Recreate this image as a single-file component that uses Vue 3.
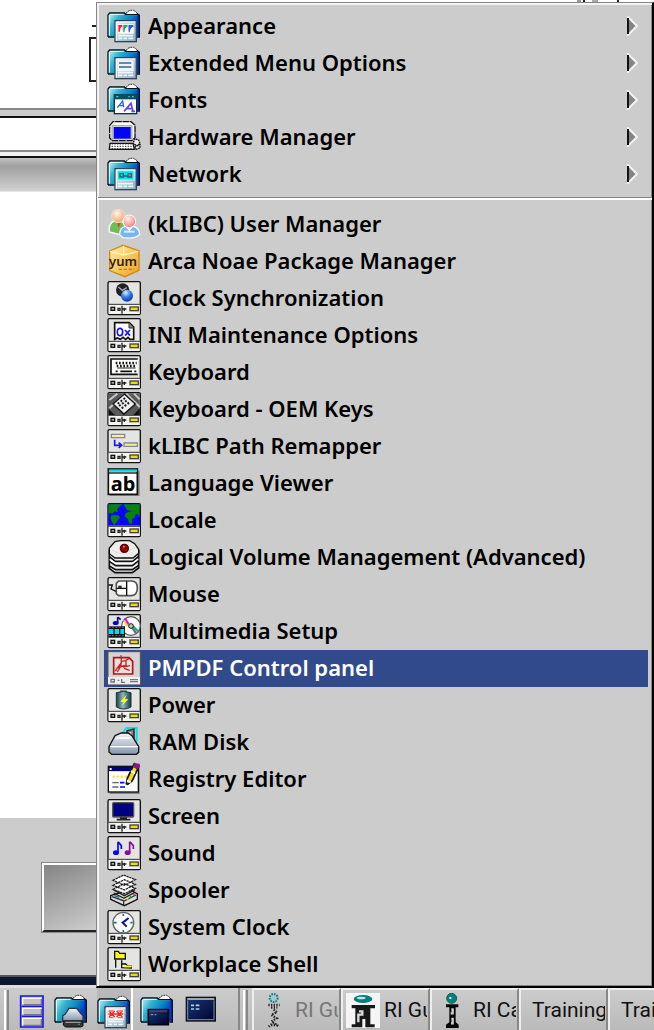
<script setup>
const folders = [
  { label: 'Appearance', icon: 'appearance' },
  { label: 'Extended Menu Options', icon: 'menuopts' },
  { label: 'Fonts', icon: 'fonts' },
  { label: 'Hardware Manager', icon: 'hardware' },
  { label: 'Network', icon: 'network' }
]
const programs = [
  { label: '(kLIBC) User Manager', icon: 'users' },
  { label: 'Arca Noae Package Manager', icon: 'yum', glyph: 'yum' },
  { label: 'Clock Synchronization', icon: 'sync', panel: true },
  { label: 'INI Maintenance Options', icon: 'ini', panel: true },
  { label: 'Keyboard', icon: 'keyboard', panel: true },
  { label: 'Keyboard - OEM Keys', icon: 'oem', panel: true },
  { label: 'kLIBC Path Remapper', icon: 'path', panel: true },
  { label: 'Language Viewer', icon: 'language', glyph: 'ab' },
  { label: 'Locale', icon: 'locale', panel: true },
  { label: 'Logical Volume Management (Advanced)', icon: 'volume' },
  { label: 'Mouse', icon: 'mouse', panel: true },
  { label: 'Multimedia Setup', icon: 'multimedia', panel: true },
  { label: 'PMPDF Control panel', icon: 'pdf', selected: true },
  { label: 'Power', icon: 'power', panel: true },
  { label: 'RAM Disk', icon: 'ram' },
  { label: 'Registry Editor', icon: 'registry' },
  { label: 'Screen', icon: 'screen', panel: true },
  { label: 'Sound', icon: 'sound', panel: true },
  { label: 'Spooler', icon: 'spooler' },
  { label: 'System Clock', icon: 'clock', panel: true },
  { label: 'Workplace Shell', icon: 'shell', panel: true }
]
const tasks = [
  { label: 'RI Gu', icon: 'ri-dim', dim: true },
  { label: 'RI Gu', icon: 'ri-wide' },
  { label: 'RI Ca', icon: 'ri' },
  { label: 'Training' },
  { label: 'Training' }
]
</script>

<template>
  <svg class="defs" width="0" height="0" aria-hidden="true">
    <defs>
      <linearGradient id="g-folder" x1="0" y1="0" x2="1" y2="0.5">
        <stop offset="0" stop-color="#c8f4fa" /><stop offset="0.35" stop-color="#35b4cf" />
        <stop offset="0.7" stop-color="#0787c4" /><stop offset="1" stop-color="#0038c8" />
      </linearGradient>
      <linearGradient id="g-glass" x1="0" y1="0" x2="1" y2="1">
        <stop offset="0" stop-color="#e4eef2" /><stop offset="1" stop-color="#8fa9ba" />
      </linearGradient>
      <linearGradient id="g-metal" x1="0" y1="0" x2="0" y2="1">
        <stop offset="0" stop-color="#f2f5fa" /><stop offset="1" stop-color="#8494ac" />
      </linearGradient>
      <linearGradient id="g-navy" x1="0" y1="0" x2="1" y2="1">
        <stop offset="0" stop-color="#1b3a80" /><stop offset="1" stop-color="#000028" />
      </linearGradient>
      <linearGradient id="g-battery" x1="0" y1="0" x2="1" y2="0">
        <stop offset="0" stop-color="#18424a" /><stop offset="0.45" stop-color="#8fb8bd" /><stop offset="1" stop-color="#143840" />
      </linearGradient>
      <radialGradient id="g-ball" cx="0.4" cy="0.25" r="0.7">
        <stop offset="0" stop-color="#d8f0ff" /><stop offset="0.5" stop-color="#3d86e8" /><stop offset="1" stop-color="#0a3db8" />
      </radialGradient>
      <radialGradient id="g-face" cx="0.4" cy="0.3" r="0.7">
        <stop offset="0" stop-color="#fff4e0" /><stop offset="1" stop-color="#eda878" />
      </radialGradient>
      <radialGradient id="g-face2" cx="0.4" cy="0.3" r="0.7">
        <stop offset="0" stop-color="#fff0ee" /><stop offset="1" stop-color="#ee8080" />
      </radialGradient>
      <linearGradient id="g-yum" x1="0" y1="0" x2="1" y2="1">
        <stop offset="0" stop-color="#fff0a8" /><stop offset="1" stop-color="#f0a018" />
      </linearGradient>
    </defs>

    <symbol id="i-folder" viewBox="0 0 102 105">
      <path d="M88 16H97V82H88Z" fill="#0838b8" />
      <path d="M4 13H90V82H4Z" fill="url(#g-folder)" />
      <path d="M57 19L63 8 70 4H80L88 9 91 19Z" fill="#fff" />
      <path d="M57 13L63 7 70 4H80L88 9 91 15" fill="none" stroke="#333" stroke-width="3" stroke-dasharray="6 2" />
      <path d="M3 84V18L8 12H52L58 17H90M90 14L97 19V84H88M23 84H3" fill="none" stroke="#001018" stroke-width="4" />
      <path d="M7 80V20L10 16H50" fill="none" stroke="#e4ffff" stroke-width="3" />
    </symbol>
    <symbol id="i-window" viewBox="0 0 102 105">
      <rect x="24" y="35" width="64" height="63" fill="url(#g-glass)" stroke="#2b4860" stroke-width="4" />
      <path d="M28 95V39H85" fill="none" stroke="#fff" stroke-width="3" />
      <path d="M33 80H78M33 88H46M50 88H60M64 88H79" stroke="#e9f6fa" stroke-width="5" />
    </symbol>
    <symbol id="i-panel" viewBox="0 0 102 105">
      <rect x="3" y="2" width="97" height="99" rx="4" fill="#e4e4e2" stroke="#111" stroke-width="4" />
      <path d="M5 70H98" stroke="#333" stroke-width="3" />
      <rect x="5" y="72" width="93" height="27" fill="#f4f4f0" />
      <rect x="12" y="79" width="11" height="9" fill="#aaa" stroke="#111" stroke-width="4" />
      <path d="M33 82H39V88H33ZM45 74V98M52 80V90M45 84H58" fill="none" stroke="#222" stroke-width="4" />
      <rect x="69" y="78" width="25" height="11" fill="#e8e000" stroke="#444" stroke-width="4" />
    </symbol>

    <symbol id="i-appearance" viewBox="0 0 102 105">
      <use href="#i-folder" /><use href="#i-window" />
      <rect x="32" y="46" width="48" height="28" fill="#fff" />
      <path d="M34 48H45V53Q39 54 39 68H34Z" fill="#f21d43" /><path d="M49 48H61V54Q54 54 52 70H49Z" fill="#10b050" /><path d="M65 48H79V54Q71 54 68 70H65Z" fill="#1760ef" />
      <path d="M45 50H48V65M61 50H64V65" stroke="#e94ec2" stroke-width="2" fill="none" />
    </symbol>
    <symbol id="i-menuopts" viewBox="0 0 102 105">
      <use href="#i-folder" /><use href="#i-window" />
      <rect x="32" y="43" width="48" height="33" fill="#eff6fa" /><path d="M36 51H73M36 63H73" stroke="#3965a0" stroke-width="4" />
    </symbol>
    <symbol id="i-fonts" viewBox="0 0 102 105">
      <use href="#i-folder" />
      <rect x="22" y="35" width="67" height="57" fill="#fff" stroke="#063447" stroke-width="4" />
      <rect x="22" y="34" width="67" height="15" fill="#06515e" /><path d="M28 41H34M64 41H68M75 41H80" stroke="#66c9ca" stroke-width="4" />
      <path d="M31 74L47 54 50 73M37 68H50" fill="none" stroke="#1668e8" stroke-width="4" /><path d="M51 85L72 61 78 85M57 77H78M73 85H84" fill="none" stroke="#6544f0" stroke-width="5" />
    </symbol>
    <symbol id="i-hardware" viewBox="0 0 102 105">
      <path d="M8 17L18 5H72L84 16V53L74 62H16L8 54Z" fill="#fff" stroke="#111" stroke-width="4" stroke-dasharray="20 2" />
      <path d="M15 17H75V57H15Z" fill="#ddd" stroke="#777" stroke-width="2" /><rect x="20" y="21" width="51" height="35" fill="#0505ef" />
      <path d="M9 70H78L82 88H7Z" fill="#fff" stroke="#111" stroke-width="4" />
      <path d="M14 72H76M14 79H77M14 86H77" stroke="#222" stroke-width="3" stroke-dasharray="4 4" />
      <path d="M79 67L84 57 95 60 99 70 90 77 78 70M83 80L99 74V84L87 88Z" fill="#eee" stroke="#111" stroke-width="4" stroke-dasharray="5 2" />
    </symbol>
    <symbol id="i-network" viewBox="0 0 102 105">
      <use href="#i-folder" /><use href="#i-window" />
      <rect x="31" y="41" width="50" height="28" fill="#00e2ef" stroke="#baf6fa" stroke-width="3" /><path d="M39 50H49V60H39ZM63 50H73V60H63ZM49 57H63" fill="#7aa" stroke="#196675" stroke-width="4" />
    </symbol>
    <symbol id="i-users" viewBox="0 0 102 105">
      <path d="M7 75Q4 48 22 42H42Q57 51 55 75L39 83Z" fill="#70bc58" stroke="#fff" stroke-width="4" /><path d="M29 42L35 63 42 42" fill="#d83f28" />
      <circle cx="34" cy="27" r="20" fill="url(#g-face)" stroke="#f2dfca" stroke-width="3" />
      <path d="M38 83Q38 61 56 58H78Q97 62 98 82Q84 97 48 92Z" fill="#7ab4f4" stroke="#f6fcff" stroke-width="4" /><path d="M51 74H83" stroke="#d9efff" stroke-width="6" />
      <circle cx="67" cy="43" r="19" fill="url(#g-face2)" stroke="#fff" stroke-width="3" /><path d="M56 61H78L67 72Z" fill="#fff" />
    </symbol>
    <symbol id="i-yum" viewBox="0 0 102 105">
      <path d="M8 21L48 4 96 20V79L54 98 8 80Z" fill="url(#g-yum)" stroke="#d18918" stroke-width="4" /><path d="M10 22L50 33 94 22M50 5V30" fill="none" stroke="#fff3b7" stroke-width="4" />
      <path d="M35 76H82" stroke="#ba7c25" stroke-width="4" stroke-dasharray="10 5" />
    </symbol>
    <symbol id="i-sync" viewBox="0 0 102 105">
      <circle cx="47" cy="27" r="20" fill="#202020" /><path d="M34 18L46 28 59 20" fill="none" stroke="#aaa" stroke-width="4" /><circle cx="60" cy="44" r="18" fill="url(#g-ball)" />
    </symbol>
    <symbol id="i-ini" viewBox="0 0 102 105">
      <path d="M23 14H67L80 27V64H69L63 58 56 64 48 58 40 64 31 60 23 64Z" fill="#fff" stroke="#111" stroke-width="5" /><path d="M66 14V30H80" fill="#888" stroke="#333" stroke-width="3" />
      <ellipse cx="39" cy="42" rx="8" ry="11" fill="none" stroke="#1616ff" stroke-width="5" /><path d="M54 36L69 53M69 36L54 53" stroke="#1616ff" stroke-width="5" />
    </symbol>
    <symbol id="i-keyboard" viewBox="0 0 102 105">
      <path d="M92 12H12V58H92" fill="#fff" stroke="#111" stroke-width="5" /><path d="M26 24H89M29 33H89" stroke="#111" stroke-width="7" stroke-dasharray="5 5" /><path d="M31 39H86" stroke="#222" stroke-width="3" /><path d="M26 49H32M40 49H75M82 49H88" stroke="#111" stroke-width="5" />
    </symbol>
    <symbol id="i-oem" viewBox="0 0 102 105">
      <path d="M5 4H98V69H5Z" fill="#595959" /><path d="M7 24L31 5M7 49L53 5M58 5L98 45M81 5L98 22" stroke="#c8c8c8" stroke-width="6" /><path d="M5 51L24 69H5ZM98 49L79 69H98Z" fill="#111" />
      <path d="M52 6L85 36 51 66 18 36Z" fill="#eee" stroke="#111" stroke-width="4" /><path d="M32 35L54 18M36 42L63 23M44 49L70 29" stroke="#222" stroke-width="6" stroke-dasharray="6 5" />
    </symbol>
    <symbol id="i-path" viewBox="0 0 102 105">
      <path d="M13 16H53V26H13ZM51 42H91V52H51Z" fill="#f4f0aa" stroke="#888" stroke-width="4" /><path d="M23 32V49H43M35 41L44 49 35 57" fill="none" stroke="#1717df" stroke-width="5" />
    </symbol>
    <symbol id="i-language" viewBox="0 0 102 105">
      <path d="M8 14H98V90H8Z" fill="#888" /><rect x="4" y="9" width="87" height="76" fill="#fff" stroke="#111" stroke-width="5" /><path d="M6 14H90" stroke="#00dce2" stroke-width="7" /><path d="M5 21H90" stroke="#111" stroke-width="4" />
    </symbol>
    <symbol id="i-locale" viewBox="0 0 102 105">
      <path d="M4 3H99V68H4Z" fill="#0808ef" /><path d="M5 4H46L36 13 30 18 33 28 24 25 16 32 5 30ZM14 37L34 37 39 43 29 56 22 67 14 55 10 43ZM50 4H98V42L91 32 83 35 74 24 60 21ZM56 30L72 25 87 32 82 44 75 48 76 61 68 63 61 46 53 41Z" fill="#078407" />
    </symbol>
    <symbol id="i-volume" viewBox="0 0 102 105">
      <path d="M7 31V85L24 98H76L95 84V31Z" fill="#eee" stroke="#111" stroke-width="5" /><path d="M7 50L25 64H77L95 49M7 64L26 77H76L95 62M7 78L26 89H76L95 76" fill="none" stroke="#111" stroke-width="5" /><path d="M8 58L26 70H76L94 57" fill="none" stroke="#fff" stroke-width="4" />
      <path d="M7 24L24 5 40 2H68L83 11 95 28V40L78 54H24L7 41Z" fill="#eee" stroke="#111" stroke-width="4" /><path d="M16 31L40 41 84 24" fill="none" stroke="#ddd" stroke-width="3" /><circle cx="52" cy="25" r="12" fill="#a50000" stroke="#400" stroke-width="4" /><path d="M48 20H53" stroke="#ff7960" stroke-width="5" />
    </symbol>
    <symbol id="i-mouse" viewBox="0 0 102 105">
      <path d="M35 12H74Q91 12 91 33T74 56H35L28 50V19Z" fill="#fff" stroke="#555" stroke-width="5" /><path d="M59 13V56M28 34H59M4 24H16L12 36 27 43" fill="none" stroke="#111" stroke-width="4" /><rect x="34" y="26" width="10" height="9" fill="#222" />
    </symbol>
    <symbol id="i-multimedia" viewBox="0 0 102 105">
      <circle cx="72" cy="36" r="28" fill="#fff" stroke="#555" stroke-width="4" /><path d="M48 17L68 31 58 39Z" fill="#f4d428" /><path d="M54 13L65 31" stroke="#e800e8" stroke-width="6" /><path d="M74 39L87 59M78 36L94 53" stroke="#00bd63" stroke-width="6" /><path d="M79 45L88 56" stroke="#e020d0" stroke-width="5" /><circle cx="72" cy="36" r="7" fill="#ccc" stroke="#111" stroke-width="3" />
      <path d="M5 37H54V69H5Z" fill="#111" /><path d="M5 45H51V60H5Z" fill="#00dfe6" /><path d="M5 40H53M5 65H53" stroke="#275ea0" stroke-width="4" stroke-dasharray="6 4" /><path d="M21 43V62M38 43V62" stroke="#111" stroke-width="4" /><path d="M32 9V26M32 9L41 17" stroke="#0808ac" stroke-width="5" /><ellipse cx="26" cy="27" rx="9" ry="6" fill="#0808ac" />
    </symbol>
    <symbol id="i-pdf" viewBox="0 0 102 105">
      <path d="M3 2H100V101H3Z" fill="#d4d4d4" stroke="#555" stroke-width="3" /><path d="M3 78H99V100H3Z" fill="#eee" /><path d="M12 85H22V93H12ZM32 88H37M44 84V94H54M69 86H93M69 92H93" fill="none" stroke="#777" stroke-width="4" />
      <path d="M20 20H66L77 31V69H20Z" fill="#e8dedb" stroke="#aa1717" stroke-width="5" /><path d="M42 13L43 35 25 60M43 34Q43 45 31 63M43 31L56 29 66 22M57 27V43L48 48 69 44M29 51L53 43M51 52L68 58" fill="none" stroke="#c32525" stroke-width="4" />
    </symbol>
    <symbol id="i-power" viewBox="0 0 102 105">
      <path d="M39 7H60V13H39Z" fill="#667" /><path d="M28 14Q49 7 72 14V57Q51 69 28 57Z" fill="url(#g-battery)" stroke="#17363b" stroke-width="3" /><path d="M59 20L40 41H51L43 55 64 34H53Z" fill="#ffff22" />
    </symbol>
    <symbol id="i-ram" viewBox="0 0 102 105">
      <path d="M44 28L58 9H89V51" fill="none" stroke="#00e5e8" stroke-width="6" /><path d="M60 17L81 12V54H60Z" fill="#888" stroke="#111" stroke-width="4" /><path d="M70 21V50" stroke="#ddd" stroke-width="5" />
      <path d="M24 32L43 24H64L75 32 95 65V82L88 88H14L6 81V65Z" fill="url(#g-metal)" stroke="#111" stroke-width="4" /><path d="M9 65H93" stroke="#fff" stroke-width="4" /><path d="M28 39H70" stroke="#fff" stroke-width="5" />
    </symbol>
    <symbol id="i-registry" viewBox="0 0 102 105">
      <path d="M8 16H98V96H8Z" fill="#888" /><rect x="4" y="13" width="90" height="77" fill="#fff" stroke="#111" stroke-width="4" /><path d="M6 21H92" stroke="#00007f" stroke-width="13" /><path d="M8 21H14" stroke="#eee" stroke-width="6" /><path d="M17 44H68" stroke="#ffe500" stroke-width="7" stroke-dasharray="6 6" /><path d="M16 62H35M16 75H34" stroke="#666" stroke-width="4" /><path d="M39 62H52M39 75H54" stroke="#00f" stroke-width="5" />
      <path d="M82 5L96 12 76 56 62 67 58 65 61 49Z" fill="#f4dc19" stroke="#111" stroke-width="5" /><path d="M81 4L98 5V17L89 22 78 15Z" fill="#8b168b" /><path d="M72 27L84 34M60 55L71 61" stroke="#fff" stroke-width="6" />
    </symbol>
    <symbol id="i-screen" viewBox="0 0 102 105">
      <rect x="17" y="11" width="63" height="43" rx="3" fill="#000080" stroke="#555" stroke-width="4" /><path d="M39 57H60M29 62H70" stroke="#222" stroke-width="5" />
    </symbol>
    <symbol id="i-sound" viewBox="0 0 102 105">
      <path d="M33 17V49M33 17L43 29V39" fill="none" stroke="#0505ef" stroke-width="5" /><ellipse cx="27" cy="50" rx="9" ry="7" fill="#0505ef" /><path d="M68 17V49M68 17L79 29V39" fill="none" stroke="#84108c" stroke-width="5" /><ellipse cx="62" cy="50" rx="9" ry="7" fill="#84108c" />
    </symbol>
    <symbol id="i-spooler" viewBox="0 0 102 105">
      <path d="M11 68L69 50 91 63V79L52 98 11 79Z" fill="#ddd" stroke="#111" stroke-width="4" /><path d="M15 71L51 84 87 66M50 85V97" fill="none" stroke="#333" stroke-width="4" />
      <path d="M18 49L52 32 85 46 52 62ZM18 37L52 20 85 34 52 51ZM18 22L50 6 85 20 52 37Z" fill="#fff" stroke="#222" stroke-width="4" stroke-dasharray="7 2" /><path d="M20 51L52 68 84 50M20 60L51 76 83 58" fill="none" stroke="#222" stroke-width="4" /><path d="M22 68L37 73" stroke="#008080" stroke-width="4" /><path d="M58 77H64" stroke="#ff0" stroke-width="5" /><path d="M68 71H73" stroke="#0b4" stroke-width="5" /><path d="M78 66H84" stroke="#f22" stroke-width="5" />
    </symbol>
    <symbol id="i-clock" viewBox="0 0 102 105">
      <circle cx="49" cy="38" r="31" fill="#fff" stroke="#666" stroke-width="4" /><path d="M49 11V18M49 60V67M20 38H29M70 38H77" stroke="#008080" stroke-width="5" /><path d="M65 24L47 38 59 50" fill="none" stroke="#0808bd" stroke-width="6" />
    </symbol>
    <symbol id="i-shell" viewBox="0 0 102 105">
      <path d="M23 13H34L38 19H55V36H23Z" fill="#ff0" stroke="#111" stroke-width="4" /><path d="M26 38V62M44 40V52H57M44 60H73" fill="none" stroke="#111" stroke-width="4" /><path d="M44 62V51H56L62 57H73V63Z" fill="#fff" stroke="#111" stroke-width="4" /><path d="M52 58H72V61" stroke="#ff0" stroke-width="5" fill="none" />
    </symbol>

    <symbol id="i-printer" viewBox="0 0 102 105">
      <use href="#i-folder" /><path d="M34 60L45 43H68L80 58 87 65V81H26V65Z" fill="url(#g-metal)" stroke="#333" stroke-width="4" /><path d="M28 81H87V96L80 99H34L28 93Z" fill="#333" stroke="#111" stroke-width="3" /><path d="M34 85H80" stroke="#999" stroke-width="4" /><path d="M73 91H78" stroke="#10b070" stroke-width="4" />
    </symbol>
    <symbol id="i-panels" viewBox="0 0 102 105">
      <use href="#i-folder" /><use href="#i-window" /><rect x="32" y="43" width="48" height="33" fill="#eefdfd" /><path d="M36 48L53 66M53 48L36 66M34 57H79M59 48L76 66M76 48L59 66" stroke="#ff2222" stroke-width="4" /><path d="M35 48H50M62 48H78M35 68H50M62 68H78" stroke="#ff6060" stroke-width="4" />
    </symbol>
    <symbol id="i-shells" viewBox="0 0 102 105">
      <use href="#i-folder" /><rect x="25" y="47" width="60" height="45" fill="url(#g-navy)" stroke="#050518" stroke-width="5" /><path d="M28 51H82" stroke="#56698a" stroke-width="3" /><path d="M32 62H40M44 62H49" stroke="#8bb0cc" stroke-width="3" />
    </symbol>
    <symbol id="i-command" viewBox="0 0 102 105">
      <rect x="4" y="10" width="87" height="71" fill="url(#g-navy)" stroke="#111" stroke-width="4" /><path d="M7 15H88" stroke="#9da6ac" stroke-width="6" /><path d="M8 19V77H87V19" fill="none" stroke="#7893b2" stroke-width="3" /><path d="M18 34H27M32 34H43M18 45H27M32 45H43" stroke="#acd1e2" stroke-width="5" />
    </symbol>
    <symbol id="i-list" viewBox="0 0 102 105">
      <path d="M8 6H75V99H8Z" fill="#c4c4c4" stroke="#1717e8" stroke-width="5" /><path d="M11 37H72M11 67H72" stroke="#1717e8" stroke-width="5" /><path d="M14 30V13H70M14 60V43H70M14 92V73H70" fill="none" stroke="#fff" stroke-width="4" /><path d="M17 32H70V15M17 62H70V45M17 94H70V75" fill="none" stroke="#777" stroke-width="4" />
    </symbol>
    <symbol id="i-ri" viewBox="0 0 102 105">
      <circle cx="50" cy="16" r="15" fill="#008080" stroke="#164" stroke-width="3" /><path d="M43 12H49V18H43Z" fill="#dff" /><path d="M33 34H70V43H62V87L71 95V105H33V95L43 88V43H33Z" fill="#080808" /><path d="M49 49H53V61H47M49 78H53V91H48" fill="none" stroke="#ccc" stroke-width="7" />
    </symbol>
    <symbol id="i-ri-dim" viewBox="0 0 102 105">
      <circle cx="50" cy="15" r="12" fill="#a9c8c8" stroke="#168080" stroke-width="6" stroke-dasharray="5 3" /><path d="M34 36H68M42 44H61M50 50L60 57 43 66 59 76 42 86M35 101L50 89 66 101M42 96H60" fill="none" stroke="#222" stroke-width="7" stroke-dasharray="4 4" />
    </symbol>
    <symbol id="i-ri-wide" viewBox="0 0 102 105">
      <path d="M0 0H102V105H0Z" fill="#f5f5f5" /><ellipse cx="51" cy="18" rx="28" ry="12" fill="#008080" /><ellipse cx="46" cy="15" rx="13" ry="4" fill="#bee5e5" /><path d="M17 36H87V46H73V94H86V103H58V78H49V103H17V94H28V46H17Z" fill="#181818" /><path d="M39 55H49V65H37V88" fill="none" stroke="#ddd" stroke-width="7" />
    </symbol>
  </svg>

  <div class="desktop">
    <main class="stage">
      <section class="window">
        <div class="page-top"><i class="dash"></i><i class="field"></i><i class="marks"></i></div>
        <div class="rule thick"></div>
        <div class="strip"></div>
        <div class="rule"></div>
        <div class="fade"></div>
        <div class="canvas"></div>
        <div class="footer"><button class="pad" aria-label="Preview"></button></div>
        <div class="backdrop"></div>
      </section>

      <nav class="menu" role="menu" aria-label="System setup">
        <button v-for="f in folders" :key="f.label" class="item" role="menuitem" aria-haspopup="true">
          <svg class="icon"><use :href="'#i-' + f.icon" /></svg>
          <span class="label">{{ f.label }}</span>
          <svg class="arrow" viewBox="0 0 11 20"><path d="M1 1L10 10 1 19Z" fill="#858585" stroke="#f4f4f4" stroke-width="2" /><path d="M1 2V18" stroke="#111" stroke-width="2" /></svg>
        </button>
        <hr class="separator" />
        <button v-for="p in programs" :key="p.label" class="item" :class="{ selected: p.selected }" role="menuitem">
          <svg class="icon">
            <use v-if="p.panel" href="#i-panel" /><use :href="'#i-' + p.icon" />
            <text v-if="p.glyph" class="glyph" :class="p.glyph" x="16" y="22" text-anchor="middle">{{ p.glyph }}</text>
          </svg>
          <span class="label">{{ p.label }}</span>
        </button>
      </nav>
    </main>

    <footer class="taskbar">
      <div class="tools">
        <i class="grip"></i>
        <button class="tool list" aria-label="Window list"><svg class="icon"><use href="#i-list" /></svg></button>
        <button class="tool" aria-label="Printers"><svg class="icon"><use href="#i-printer" /></svg></button>
        <button class="tool active" aria-label="System setup"><svg class="icon"><use href="#i-panels" /></svg></button>
        <button class="tool" aria-label="Command prompts"><svg class="icon"><use href="#i-shells" /></svg></button>
        <button class="tool" aria-label="Command window"><svg class="icon"><use href="#i-command" /></svg></button>
      </div>
      <div class="tasks">
        <i class="grip"></i>
        <button v-for="(t, n) in tasks" :key="n" class="task" :class="{ dim: t.dim }">
          <svg v-if="t.icon" class="icon"><use :href="'#i-' + t.icon" /></svg>
          <span class="caption">{{ t.label }}</span>
        </button>
      </div>
    </footer>
  </div>
</template>

<style>
body { margin: 0; background: #ccc; }
</style>

<style scoped>
.defs { position: absolute; }
.desktop { min-height: 100vh; display: flex; flex-direction: column; overflow: hidden; }
button { border: 0; padding: 0; background: none; color: inherit; font: inherit; box-sizing: border-box; }
.icon { display: block; flex: none; width: 34px; height: 35px; }

.stage { display: grid; flex: 1; grid-template-columns: minmax(0, 1fr); }
.window, .menu { grid-area: 1 / 1; }
.window { display: flex; flex-direction: column; background: #fff; }
.page-top { height: 108px; position: relative; }
.dash { position: absolute; left: 92px; top: 25px; width: 8px; height: 2px; background: #222; }
.field { position: absolute; left: 89px; top: 37px; width: 30px; height: 45px; box-sizing: border-box; border: 2px solid #222; }
.marks { position: absolute; right: 35px; top: 0; width: 42px; height: 2px; background: linear-gradient(90deg, #999 4px, #fff 4px 6px, #222 6px 8px, #fff 8px 15px, #aaa 15px 21px, #fff 21px 40px, #222 40px); }
.rule { height: 8px; box-sizing: border-box; border-top: 2px solid #888; border-bottom: 2px solid #111; background: #eee; }
.thick { height: 10px; background: #ccc; }
.strip { height: 32px; }
.fade { height: 34px; background: linear-gradient(#c0c0c0, #a0a0a0 25%, #cfcfcf 95%, #eee); }
.canvas { flex: 1; }
.footer { height: 157px; box-sizing: border-box; padding: 45px 0 0 42px; background: #ccc; }
.pad { display: block; width: 100px; height: 69px; border: 2px solid #fff; border-bottom-color: #222; outline: 1px solid #888; background: linear-gradient(155deg, #858585, #ccc 80%); }
.backdrop { height: 13px; box-sizing: border-box; border-top: 2px solid #555; border-bottom: 3px solid #ddd; background: #0b1730; }

.menu {
  position: relative; margin: 2px 0 0 96px; padding: 5px 4px 0 7px;
  border: 1px solid #888; border-width: 1px 2px 2px 1px; border-color: #858585 #000 #000 #858585;
  background: #ccc; box-shadow: inset 2px 2px #f4f4f4, inset -1px -1px #858585;
  font: 600 22px/34px "Noto Sans", sans-serif; color: #000;
}
.item { display: flex; align-items: center; width: 100%; height: 37px; padding: 0 10px 0 3px; text-align: left; white-space: nowrap; }
.label { flex: 1; min-width: 0; margin: 0 0 3px 7px; overflow: hidden; }
.arrow { width: 11px; height: 20px; margin-bottom: 1px; }
.selected { background: #314a8c; color: #fff; }
.separator { height: 1px; margin: 4px -4px 6px -6px; border: 0; border-top: 1px solid #858585; border-bottom: 1px solid #fff; background: #fff; }
.glyph { font-family: "Noto Sans", sans-serif; font-weight: 600; font-size: 13px; fill: #30210d; }
.glyph.ab { font-weight: 700; font-size: 20px; fill: #000; transform: translateY(3px); }

.taskbar { display: flex; height: 42px; background: linear-gradient(#ccc, #bababa); font: 21px/32px Roboto, sans-serif; color: #111; }
.tools { display: flex; flex: none; width: 240px; box-sizing: border-box; padding: 0 0 0 4px; border-right: 2px solid #888; }
.grip { flex: none; width: 5px; height: 40px; margin-top: 2px; border-left: 2px solid #fff; border-right: 2px solid #888; box-sizing: border-box; }
.tool { display: flex; align-items: flex-start; flex: none; width: 44px; height: 42px; padding: 6px 0 0 1px; }
.list { padding-left: 9px; }
.active { width: 36px; padding-top: 7px; padding-left: 0; border-right: 2px solid #fff; background: #b8b8b8; }
.active + .tool { padding-left: 7px; width: 51px; }
.tasks { display: flex; flex: 1; min-width: 0; padding-left: 3px; overflow: hidden; }
.tasks .grip { margin-right: 4px; }
.task { display: flex; align-items: center; flex: none; width: 89px; height: 42px; padding: 0 1px 0 3px; overflow: hidden; white-space: nowrap; border-left: 2px solid #eee; border-right: 2px solid #888; border-top: 2px solid #eee; }
.task .icon { margin-right: 4px; }
.caption { flex: 1; min-width: 0; overflow: hidden; text-align: left; }
.caption:only-child { margin-left: 8px; }
.dim { color: #777; }
</style>
